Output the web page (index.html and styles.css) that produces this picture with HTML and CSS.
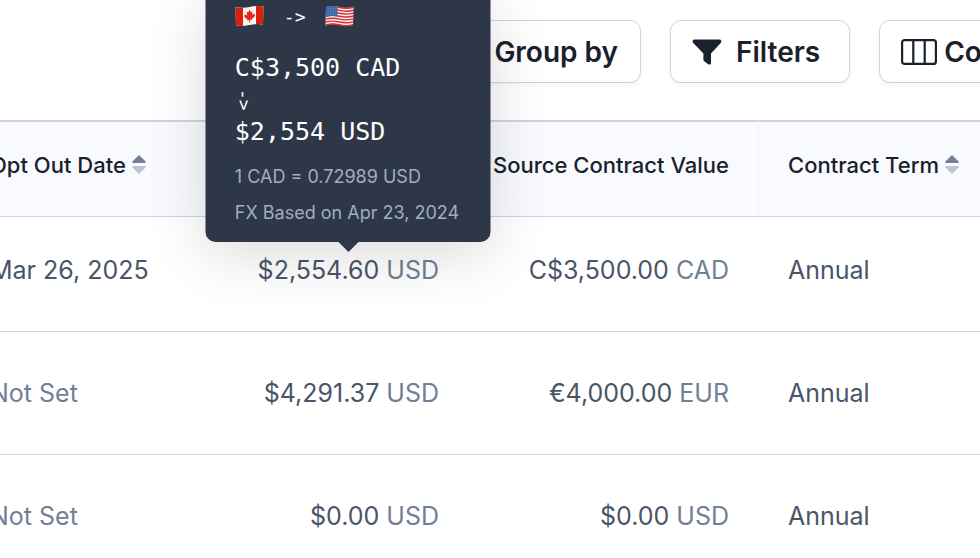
FILE: index.html
```
<!DOCTYPE html>
<html lang="en">
<head>
    <meta charset="UTF-8">
    <meta name="viewport" content="width=device-width, initial-scale=1.0">
    <title>Contracts</title>
    <link rel="stylesheet" href="styles.css">
</head>
<body>
    <div class="toolbar">
        <button type="button" class="btn btn-group">Group by</button>
        <button type="button" class="btn">
            <svg class="icon-filter" width="30" height="26" viewBox="0 0 30 26" aria-hidden="true">
                <path d="M2.5 0.5H27.5C29.4 0.5 30 2.6 28.7 4L19 14.6V24C19 25.6 17.4 26 16.2 25.2L12.2 22.2C11.6 21.7 11.4 21.2 11.4 20.5V14.6L1.3 4C0 2.6 0.6 0.5 2.5 0.5Z" fill="currentColor"/>
            </svg>
            Filters
        </button>
        <button type="button" class="btn btn-columns">
            <svg width="36" height="26" viewBox="0 0 36 26" fill="none" stroke="currentColor" stroke-width="2.2" aria-hidden="true">
                <rect x="1.1" y="1.1" width="33.8" height="23.8" rx="2.5"/>
                <path d="M12.3 1V25M23.7 1V25"/>
            </svg>
            Columns
        </button>
    </div>

    <div class="table-wrap">
        <table>
            <colgroup>
                <col class="col-date">
                <col class="col-value">
                <col class="col-value">
                <col>
            </colgroup>
            <thead>
                <tr>
                    <th>Opt Out Date
                        <svg class="sort" width="14" height="19" viewBox="0 0 14 19" aria-hidden="true">
                            <path d="M7 0L13.6 6.6Q14 8 13 8H1Q0 8 0.4 6.6Z" fill="#718096"/>
                            <path d="M7 19L13.6 12.4Q14 11 13 11H1Q0 11 0.4 12.4Z" fill="#bcc4d0"/>
                        </svg>
                    </th>
                    <th aria-label="Contract Value"></th>
                    <th class="num">Source Contract Value</th>
                    <th>Contract Term
                        <svg class="sort" width="14" height="19" viewBox="0 0 14 19" aria-hidden="true">
                            <path d="M7 0L13.6 6.6Q14 8 13 8H1Q0 8 0.4 6.6Z" fill="#718096"/>
                            <path d="M7 19L13.6 12.4Q14 11 13 11H1Q0 11 0.4 12.4Z" fill="#bcc4d0"/>
                        </svg>
                    </th>
                </tr>
            </thead>
            <tbody>
                <tr>
                    <td>Mar 26, 2025</td>
                    <td class="num">
                        <span class="amount">$2,554.60 <span class="currency">USD</span>
                            <span class="tooltip" role="tooltip">
                                <span class="flags">
                                    <svg width="30" height="22" viewBox="0 0 30 22" role="img" aria-label="Canada">
                                        <path d="M1 2Q8 3.6 15 2T29 1.5L28.5 19.5Q22 18.5 15 20T1.5 20.5Z" fill="#f4f4f2"/>
                                        <path d="M1 2Q5 3 8.5 2.7V20.8Q5 21.2 1.5 20.5Z" fill="#d8200f"/>
                                        <path d="M21.5 1.2Q25 0.8 29 1.5L28.5 19.5Q25 18.8 21.5 19Z" fill="#d8200f"/>
                                        <path d="M15 4.5L16.4 7.2L18 6.4L17.5 10L19.2 8.8L20.5 9.6L20 11.8L17 14L17.2 15.2L15.4 15V17.6H14.6V15L12.6 15.4L12.9 14.2L10 12.2L9.8 10.2L11.2 9.4L12.7 10.4L12.2 6.8L13.7 7.4Z" fill="#e3261a"/>
                                    </svg>
                                    <span class="arrow">-&gt;</span>
                                    <svg width="30" height="22" viewBox="0 0 30 22" role="img" aria-label="United States">
                                        <path d="M1.5 2Q8 0 15 2T29 1.8L28.5 20Q22 21.4 15 19.5T1 20.5Z" fill="#f4eeee"/>
                                        <g fill="none" stroke="#d42f35" stroke-width="1.4">
                                            <path d="M1.5 2.5Q8 0.8 15 2.5T29 2.3"/>
                                            <path d="M1.5 5.4Q8 3.7 15 5.4T29 5.2"/>
                                            <path d="M1.5 8.3Q8 6.6 15 8.3T29 8.1"/>
                                            <path d="M1.5 11.2Q8 9.5 15 11.2T29 11"/>
                                            <path d="M1.2 14.1Q8 12.4 15 14.1T28.8 13.9"/>
                                            <path d="M1.2 17Q8 15.3 15 17T28.8 16.8"/>
                                            <path d="M1.2 19.9Q8 18.2 15 19.9T28.6 19.7"/>
                                        </g>
                                        <path d="M1.5 2Q7 0.2 13 1.6V11.6Q7 10.2 1.3 11.8Z" fill="#376aa6"/>
                                        <path d="M3 4.2Q7 3 12 4M3 6.8Q7 5.6 12 6.6M3 9.4Q7 8.2 12 9.2" fill="none" stroke="#7fa3cb" stroke-dasharray="1 1.6"/>
                                    </svg>
                                </span>
                                <span class="money">C$3,500 CAD</span>
                                <span class="down"><span class="arrow">-&gt;</span></span>
                                <span class="money">$2,554 USD</span>
                                <span class="rate">1 CAD = 0.72989 USD</span>
                                <span class="note">FX Based on Apr 23, 2024</span>
                            </span>
                        </span>
                    </td>
                    <td class="num">C$3,500.00 <span class="currency">CAD</span></td>
                    <td>Annual</td>
                </tr>
                <tr>
                    <td class="not-set">Not Set</td>
                    <td class="num">$4,291.37 <span class="currency">USD</span></td>
                    <td class="num">€4,000.00 <span class="currency">EUR</span></td>
                    <td>Annual</td>
                </tr>
                <tr>
                    <td class="not-set">Not Set</td>
                    <td class="num">$0.00 <span class="currency">USD</span></td>
                    <td class="num">$0.00 <span class="currency">USD</span></td>
                    <td>Annual</td>
                </tr>
            </tbody>
        </table>
    </div>
</body>
</html>
```
FILE: styles.css
```
* {
    box-sizing: border-box;
}
body {
    margin: 0;
    font-family: Inter, "Liberation Sans", sans-serif;
    background: #fff;
    color: #4a5568;
    overflow: hidden;
}
.toolbar {
    display: flex;
    gap: 29px;
    padding: 20px 0 37px 440px;
    overflow: hidden;
}
.btn {
    display: flex;
    align-items: center;
    flex-shrink: 0;
    gap: 14px;
    height: 63px;
    padding: 0 29px 0 21px;
    background: #fff;
    border: 1px solid #cbd5e0;
    border-radius: 11px;
    box-shadow: 0 2px 4px rgba(0, 0, 0, 0.05);
    font-family: inherit;
    font-size: 28px;
    font-weight: 600;
    color: #1a202c;
    cursor: pointer;
}
.btn-group {
    width: 201px;
    padding: 0 22px;
    justify-content: flex-end;
}
.btn-columns {
    gap: 7px;
}
.table-wrap {
    margin-left: -39px;
}
table {
    width: 100%;
    table-layout: fixed;
    border-collapse: separate;
    border-spacing: 0;
    font-size: 25px;
}
.col-date {
    width: 217px;
}
.col-value {
    width: 290px;
}
th {
    height: 97px;
    padding: 0 29px 9px;
    background: #f8fafe;
    border-top: 2px solid #cbd5e0;
    border-bottom: 1px solid #cbd5e0;
    font-size: 22px;
    font-weight: 500;
    color: #1a202c;
    text-align: left;
    white-space: nowrap;
}
th:last-child {
    border-left: 1px solid #f1f5f9;
}
.sort {
    vertical-align: -1px;
}
td {
    height: 123px;
    padding: 0 29px;
    border-bottom: 1px solid #cbd5e0;
    white-space: nowrap;
}
tbody tr:first-child td {
    height: 115px;
    padding-bottom: 8px;
}
td:last-child {
    padding-left: 30px;
}
.num {
    padding-left: 0;
    text-align: right;
}
.currency,
.not-set {
    color: #718096;
}
.amount {
    position: relative;
    display: inline-block;
}
.tooltip {
    position: absolute;
    bottom: 100%;
    left: 50%;
    transform: translateX(-50%);
    margin-bottom: 13px;
    display: flex;
    flex-direction: column;
    width: 285px;
    padding: 11px 29px;
    background: #2d3748;
    border-radius: 10px;
    box-shadow: 0 14px 60px rgba(0, 0, 0, 0.14);
    color: #fff;
    text-align: left;
}
.tooltip::after {
    content: "";
    position: absolute;
    top: 100%;
    left: 50%;
    margin: -1px 0 0 -11px;
    border: 11px solid transparent;
    border-top-color: #2d3748;
    border-bottom: 0;
}
.flags {
    display: flex;
    align-items: center;
    gap: 19px;
    height: 36px;
    margin-bottom: 18px;
}
.arrow {
    font-family: "DejaVu Sans Mono", monospace;
    font-size: 18px;
}
.money {
    font-family: "DejaVu Sans Mono", monospace;
    font-size: 25px;
    line-height: 32px;
}
.down {
    display: flex;
    align-items: center;
    height: 32px;
}
.down .arrow {
    writing-mode: vertical-rl;
    line-height: 18px;
}
.rate,
.note {
    font-size: 18px;
    line-height: 36px;
    color: #a0aec0;
}
.rate {
    margin-top: 11px;
}
```
